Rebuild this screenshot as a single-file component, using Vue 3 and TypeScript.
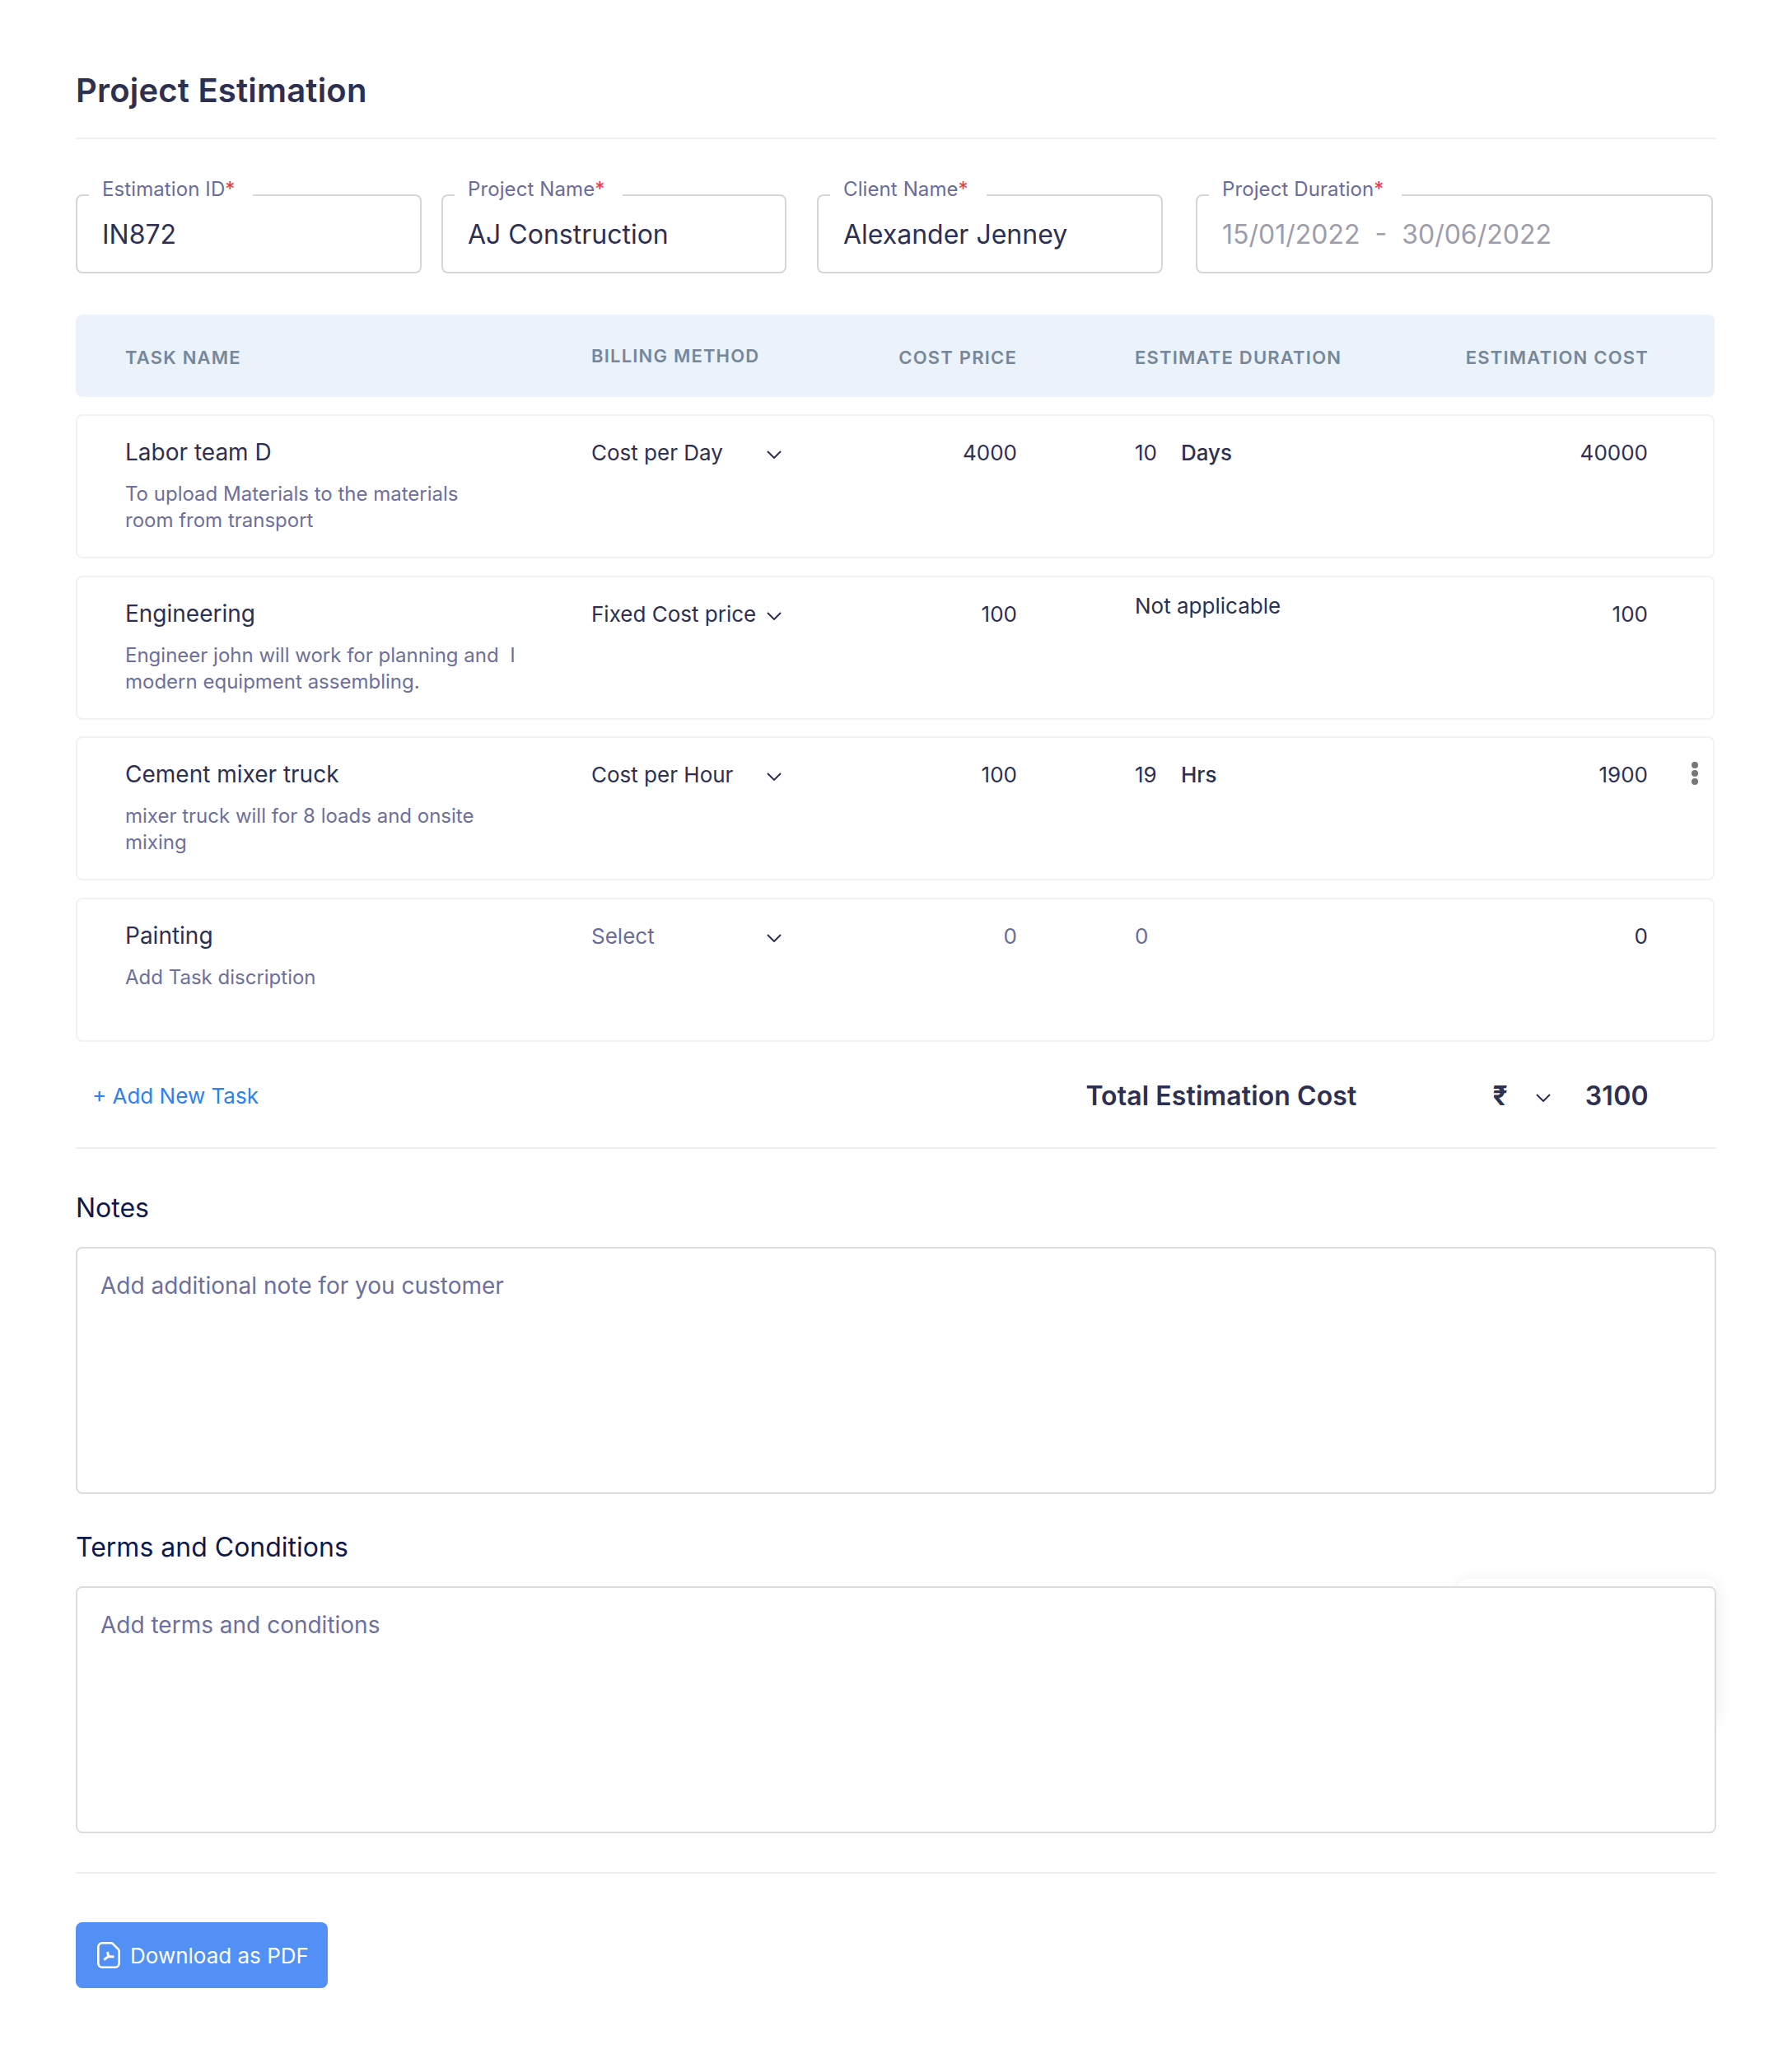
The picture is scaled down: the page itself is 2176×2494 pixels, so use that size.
<script setup lang="ts">
interface Field {
  label: string
  value: string
  muted?: boolean
}

interface Task {
  name: string
  desc: string[]
  billing: string
  cost: string
  qty: string
  unit: string
  total: string
  empty?: boolean
  menu?: boolean
}

const fields: Field[] = [
  { label: 'Estimation ID', value: 'IN872' },
  { label: 'Project Name', value: 'AJ Construction' },
  { label: 'Client Name', value: 'Alexander Jenney' },
  { label: 'Project Duration', value: '15/01/2022\u00a0 -\u00a0 30/06/2022', muted: true },
]

const tasks: Task[] = [
  {
    name: 'Labor team D',
    desc: ['To upload Materials to the materials', 'room from transport'],
    billing: 'Cost per Day',
    cost: '4000',
    qty: '10',
    unit: 'Days',
    total: '40000',
  },
  {
    name: 'Engineering',
    desc: ['Engineer john will work for planning and\u00a0 I', 'modern equipment assembling.'],
    billing: 'Fixed Cost price',
    cost: '100',
    qty: '',
    unit: '',
    total: '100',
  },
  {
    name: 'Cement mixer truck',
    desc: ['mixer truck will for 8 loads and onsite', 'mixing'],
    billing: 'Cost per Hour',
    cost: '100',
    qty: '19',
    unit: 'Hrs',
    total: '1900',
    menu: true,
  },
  {
    name: 'Painting',
    desc: ['Add Task discription'],
    billing: 'Select',
    cost: '0',
    qty: '0',
    unit: '',
    total: '0',
    empty: true,
  },
]
</script>

<template>
  <main class="page">
    <h1 class="title">Project Estimation</h1>

    <section class="fields">
      <div v-for="field in fields" :key="field.label" class="field">
        <span class="field-label">{{ field.label }}<i>*</i></span>
        <span class="field-value" :class="{ muted: field.muted }">{{ field.value }}</span>
      </div>
    </section>

    <div class="table-head table-grid">
      <span>TASK NAME</span>
      <span class="head-billing">BILLING METHOD</span>
      <span class="right">COST PRICE</span>
      <span class="duration">ESTIMATE DURATION</span>
      <span class="right">ESTIMATION COST</span>
    </div>

    <div class="rows">
      <div v-for="task in tasks" :key="task.name" class="row table-grid">
        <div>
          <div class="task-name">{{ task.name }}</div>
          <div class="task-desc">
            <div v-for="line in task.desc" :key="line">{{ line }}</div>
          </div>
        </div>
        <div class="billing" :class="{ soft: task.empty }">
          <span>{{ task.billing }}</span>
          <svg class="chevron" width="18" height="10" viewBox="0 0 18 10">
            <path d="M1 1l8 8 8-8" />
          </svg>
        </div>
        <div class="right cell" :class="{ soft: task.empty }">{{ task.cost }}</div>
        <div v-if="task.qty" class="duration cell" :class="{ soft: task.empty }">
          <span class="qty">{{ task.qty }}</span>
          <span class="unit">{{ task.unit }}</span>
        </div>
        <div v-else class="duration cell not-applicable">Not applicable</div>
        <div class="right cell">{{ task.total }}</div>
        <span v-if="task.menu" class="kebab"><b></b><b></b><b></b></span>
      </div>
    </div>

    <div class="totals">
      <span class="add-task">+ Add New Task</span>
      <span class="total-label">Total Estimation Cost</span>
      <span class="currency">₹</span>
      <svg class="chevron total-chevron" width="18" height="10" viewBox="0 0 18 10">
        <path d="M1 1l8 8 8-8" />
      </svg>
      <span class="total-value">3100</span>
    </div>

    <h2 class="section-title">Notes</h2>
    <div class="note-box">Add additional note for you customer</div>

    <h2 class="section-title terms-title">Terms and Conditions</h2>
    <div class="terms-wrap">
      <div class="ghost-card"></div>
      <div class="note-box terms-box">Add terms and conditions</div>
    </div>

    <div class="actions">
      <button type="button" class="download">
        <svg width="28" height="32" viewBox="0 0 28 32">
          <path class="file" d="M6 1.300h11a3 3 0 0 1 2 .9l6.700 6.700a3 3 0 0 1 .9 2V26a4.700 4.700 0 0 1-4.700 4.700H6A4.700 4.700 0 0 1 1.300 26V6A4.700 4.700 0 0 1 6 1.300z" />
          <path class="mark" d="M12.500 12.200l1.200 5M14 17.400l6.500.6M14 17.400l-5.800 4.200" />
        </svg>
        <span>Download as PDF</span>
      </button>
    </div>
  </main>
</template>

<style>
html,
body {
  background: #ffffff;
}
</style>

<style scoped>
.page {
  box-sizing: border-box;
  width: 2176px;
  height: 2494px;
  padding: 86px 92px 0;
  font-family: Inter, "Liberation Sans", sans-serif;
  color: #2e3052;
}

.title {
  margin: 0;
  padding-bottom: 33px;
  font-size: 40px;
  line-height: 48px;
  font-weight: 600;
  letter-spacing: 0.2px;
  border-bottom: 2px solid #eeeef8;
}

.fields {
  display: flex;
  margin-top: 67px;
}

.field {
  position: relative;
  flex: none;
  display: flex;
  align-items: center;
  width: 420px;
  height: 96px;
  box-sizing: border-box;
  padding: 1px 0 0 30px;
  border: 2px solid #d6d6d6;
  border-radius: 8px;
}

.field:nth-child(2) {
  width: 419px;
  margin-left: 24px;
}

.field:nth-child(3) {
  margin-left: 37px;
}

.field:nth-child(4) {
  width: 628px;
  margin-left: 40px;
}

.field-label {
  position: absolute;
  top: -23px;
  left: 14px;
  padding: 0 22px 0 16px;
  background: #ffffff;
  font-size: 24px;
  line-height: 30px;
  letter-spacing: 0.1px;
  color: #6a6c9c;
}

.field-label i {
  font-style: normal;
  color: #f5303f;
}

.field-value {
  font-size: 32px;
  color: #2e3052;
}

.field-value.muted {
  color: #9d9dab;
}

.table-grid {
  display: grid;
  grid-template-columns: 566px 240px 277px 1fr 300px;
}

.table-head {
  height: 100px;
  box-sizing: border-box;
  margin-top: 50px;
  padding: 4px 80px 0 60px;
  align-items: center;
  width: 1990px;
  background: #ebf2f9;
  border-radius: 8px;
  font-size: 22px;
  font-weight: 600;
  letter-spacing: 1.2px;
  color: #76879a;
}

.head-billing {
  position: relative;
  top: -2px;
}

.right {
  text-align: right;
}

.duration {
  padding-left: 143px;
}

.rows {
  display: flex;
  flex-direction: column;
  gap: 20.700px;
  margin-top: 21px;
}

.row {
  position: relative;
  box-sizing: border-box;
  width: 1990px;
  height: 175px;
  padding: 27px 79px 0 58px;
  border: 2px solid #f2f2f4;
  border-radius: 8px;
  font-size: 26px;
  line-height: 36px;
}

.task-name {
  margin-top: -1px;
  font-size: 28px;
}

.task-desc {
  margin-top: 17px;
  font-size: 24px;
  line-height: 32px;
  color: #6d6f9c;
}

.billing {
  display: flex;
  align-items: center;
  justify-content: space-between;
  padding-right: 9px;
  height: 36px;
}

.chevron {
  flex: none;
  margin-top: 4px;
}

.chevron path {
  fill: none;
  stroke: #2e3052;
  stroke-width: 2;
}

.soft {
  color: #6a6c9c;
}

.qty {
  display: inline-block;
  width: 56px;
}

.unit {
  font-weight: 500;
}

.not-applicable {
  margin-top: -10px;
}

.kebab {
  position: absolute;
  top: 29px;
  right: 18px;
  display: flex;
  flex-direction: column;
  gap: 2px;
}

.kebab b {
  width: 8px;
  height: 8px;
  border-radius: 50%;
  background: #777777;
}

.totals {
  display: flex;
  align-items: center;
  height: 130px;
  box-sizing: border-box;
  padding: 3px 82px 0 20px;
  border-bottom: 2px solid #eeeef8;
}

.add-task {
  margin-right: auto;
  font-size: 26px;
  color: #2f7ff0;
}

.total-label {
  font-size: 32px;
  font-weight: 600;
  letter-spacing: 0.1px;
}

.currency {
  margin-left: 165px;
  font-size: 32px;
  font-weight: 700;
}

.total-chevron {
  margin-left: 34px;
}

.total-value {
  margin-left: 42px;
  font-size: 32px;
  font-weight: 600;
  letter-spacing: 0.3px;
}

.section-title {
  margin: 52px 0 0;
  font-size: 32px;
  line-height: 40px;
  font-weight: 400;
  color: #0e1a4c;
}

.terms-title {
  margin-top: 45px;
}

.note-box {
  box-sizing: border-box;
  height: 300px;
  margin-top: 27px;
  padding: 27px 28px;
  border: 2px solid #dcdcdc;
  border-radius: 8px;
  background: #ffffff;
  font-size: 28px;
  line-height: 36px;
  color: #6d6f9c;
}

.terms-wrap {
  position: relative;
  margin-top: 27px;
}

.terms-box {
  position: relative;
  margin-top: 0;
}

.ghost-card {
  position: absolute;
  top: -9px;
  right: 0;
  width: 314px;
  height: 172px;
  background: #ffffff;
  border-radius: 12px;
  box-shadow: 0 4px 20px rgba(0, 0, 0, 0.09);
}

.actions {
  margin-top: 47px;
  padding-top: 59px;
  border-top: 2px solid #eeeef8;
}

.download {
  display: flex;
  align-items: center;
  gap: 12px;
  width: 306px;
  height: 80px;
  box-sizing: border-box;
  padding: 0 0 0 26px;
  border: 0;
  border-radius: 8px;
  background: #5290f5;
  font-family: inherit;
  font-size: 26px;
  white-space: nowrap;
  color: #ffffff;
}

.file {
  fill: none;
  stroke: #ffffff;
  stroke-width: 2.600;
}

.mark {
  fill: none;
  stroke: #ffffff;
  stroke-width: 3;
}
</style>
